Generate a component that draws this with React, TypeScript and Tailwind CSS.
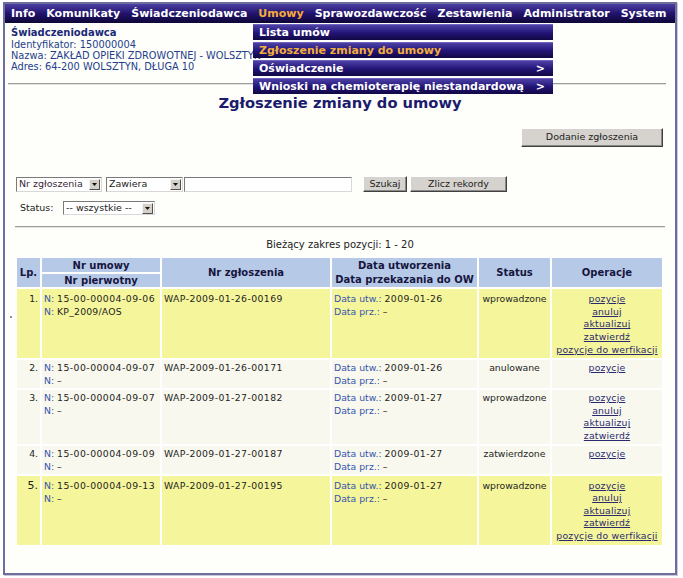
import React from 'react';

const menu = ['Info', 'Komunikaty', 'Świadczeniodawca', 'Umowy', 'Sprawozdawczość', 'Zestawienia', 'Administrator', 'System'];

type Row = {
  lp: string;
  nr: string;
  np: string;
  zg: string;
  dutw: string;
  status: string;
  ops: string[];
  yellow: boolean;
};

const opsFull = ['pozycje', 'anuluj', 'aktualizuj', 'zatwierdź', 'pozycje do werfikacji'];
const opsMid = ['pozycje', 'anuluj', 'aktualizuj', 'zatwierdź'];

const rows: Row[] = [
  { lp: '1.', nr: '15-00-00004-09-06', np: 'KP_2009/AOS', zg: 'WAP-2009-01-26-00169', dutw: '2009-01-26', status: 'wprowadzone', ops: opsFull, yellow: true },
  { lp: '2.', nr: '15-00-00004-09-07', np: '–', zg: 'WAP-2009-01-26-00171', dutw: '2009-01-26', status: 'anulowane', ops: ['pozycje'], yellow: false },
  { lp: '3.', nr: '15-00-00004-09-07', np: '–', zg: 'WAP-2009-01-27-00182', dutw: '2009-01-27', status: 'wprowadzone', ops: opsMid, yellow: false },
  { lp: '4.', nr: '15-00-00004-09-09', np: '–', zg: 'WAP-2009-01-27-00187', dutw: '2009-01-27', status: 'zatwierdzone', ops: ['pozycje'], yellow: false },
  { lp: '5.', nr: '15-00-00004-09-13', np: '–', zg: 'WAP-2009-01-27-00195', dutw: '2009-01-27', status: 'wprowadzone', ops: opsFull, yellow: true },
];

function Arrow() {
  return (
    <div className="w-[11px] h-[11px] bg-[#d4d0c8] border border-t-[#f4f4f4] border-l-[#f4f4f4] border-r-[#505050] border-b-[#505050] flex items-center justify-center shrink-0">
      <svg width="5" height="3" viewBox="0 0 5 3">
        <polygon points="0,0 5,0 2.5,3" fill="#111" />
      </svg>
    </div>
  );
}

function Btn({ label, className }: { label: string; className: string }) {
  return (
    <div
      className={
        'bg-[#d6d3ce] border border-t-white border-l-white border-r-[#404040] border-b-[#404040] shadow-[inset_-1px_-1px_0_#8a8a8a] flex items-center justify-center text-[9.5px] text-[#222] ' +
        className
      }
    >
      {label}
    </div>
  );
}

function DropItem({ label, orange, arrow }: { label: string; orange?: boolean; arrow?: boolean }) {
  return (
    <div className="h-[16px] bg-linear-to-b from-[#4e40a6] via-[#241579] to-[#110844] border-t border-[#6f62c0] flex items-center justify-between pl-[6px] pr-[8px] text-[11px] font-bold leading-none">
      <span className={orange ? 'text-[#f2ad3c]' : 'text-white'}>{label}</span>
      {arrow ? <span className="text-white">&gt;</span> : null}
    </div>
  );
}

export default function App() {
  return (
    <div className="w-[683px] h-[578px] bg-white pt-[2px] pl-[3px] font-['DejaVu_Sans',Verdana,sans-serif] overflow-hidden">
      <div className="relative w-[674px] h-[573px] border-2 border-[#6e6e9c] bg-[#fefefb] shadow-[1px_1px_0_#c8c8d8]">
        {/* menu bar */}
        <div className="h-[19px] bg-linear-to-b from-[#4d3ea4] via-[#22136e] to-[#0e0736] flex items-center pl-[6px] gap-[11px] text-[11px] font-bold leading-none">
          {menu.map((m) => (
            <span key={m} className={m === 'Umowy' ? 'text-[#f4a93a]' : 'text-white'}>
              {m}
            </span>
          ))}
        </div>

        {/* info block */}
        <div className="pt-[4px] pl-[6px] text-[#24408a]">
          <div className="text-[10px] font-bold leading-[12px] text-[#1a2a78]">Świadczeniodawca</div>
          <div className="text-[9.8px] leading-[11px]">Identyfikator: 150000004</div>
          <div className="text-[9.8px] leading-[11px]">Nazwa: ZAKŁAD OPIEKI ZDROWOTNEJ - WOLSZTYN</div>
          <div className="text-[9.8px] leading-[11px]">Adres: 64-200 WOLSZTYN, DŁUGA 10</div>
        </div>

        <div className="mt-[11px] ml-[3px] w-[658px] border-t border-b border-t-[#9c9c9c] border-b-[#e2e2e2]" />

        <div className="mt-[9px] text-center text-[14.7px] font-bold leading-[18px] text-[#1b1b6e]">
          Zgłoszenie zmiany do umowy
        </div>

        <div className="mt-[16px] flex justify-end pr-[12px]">
          <Btn label="Dodanie zgłoszenia" className="w-[142px] h-[19px]" />
        </div>

        {/* search row */}
        <div className="mt-[29px] ml-[11px] flex items-center h-[16px] text-[9.5px] text-[#222]">
          <div className="w-[86px] h-[15px] bg-white border border-t-[#7a7a7a] border-l-[#7a7a7a] border-r-[#d8d8d8] border-b-[#d8d8d8] flex items-center justify-between pl-[2px] pr-[1px]">
            <span className="text-[#3a2a3a]">Nr zgłoszenia</span>
            <Arrow />
          </div>
          <div className="ml-[4px] w-[77px] h-[15px] bg-white border border-t-[#7a7a7a] border-l-[#7a7a7a] border-r-[#d8d8d8] border-b-[#d8d8d8] flex items-center justify-between pl-[2px] pr-[1px]">
            <span>Zawiera</span>
            <Arrow />
          </div>
          <div className="ml-[1px] w-[168px] h-[15px] bg-white border border-t-[#7a7a7a] border-l-[#7a7a7a] border-r-[#d8d8d8] border-b-[#d8d8d8]" />
          <Btn label="Szukaj" className="ml-[11px] w-[44px] h-[16px]" />
          <Btn label="Zlicz rekordy" className="ml-[3px] w-[97px] h-[16px]" />
        </div>

        <div className="mt-[9px] ml-[15px] flex items-center text-[9.5px] text-[#222]">
          <span className="w-[43px]">Status:</span>
          <div className="w-[92px] h-[14px] bg-white border border-t-[#7a7a7a] border-l-[#7a7a7a] border-r-[#d8d8d8] border-b-[#d8d8d8] flex items-center justify-between pl-[2px] pr-[1px]">
            <span>-- wszystkie --</span>
            <Arrow />
          </div>
        </div>

        <div className="mt-[11px] ml-[10px] w-[650px] border-t border-b border-t-[#9c9c9c] border-b-[#e2e2e2]" />

        <div className="mt-[10px] text-center text-[10px] leading-[13px] text-[#222]">Bieżący zakres pozycji: 1 - 20</div>

        <table className="mt-[5px] ml-[10px] w-[649px] table-fixed border-separate border-spacing-[2px] bg-white text-[9.3px] leading-[13px] text-[#1e1e1e]">
          <colgroup>
            <col className="w-[23px]" />
            <col className="w-[118px]" />
            <col className="w-[168px]" />
            <col className="w-[145px]" />
            <col className="w-[71px]" />
            <col className="w-[110px]" />
          </colgroup>
          <thead className="text-[10px] font-bold text-[#161640]">
            <tr>
              <th rowSpan={2} className="bg-[#b6cae8] p-0 text-center leading-[13px]">Lp.</th>
              <th className="bg-[#b6cae8] p-0 text-center leading-[13px] h-[14px]">Nr umowy</th>
              <th rowSpan={2} className="bg-[#b6cae8] p-0 text-center leading-[13px]">Nr zgłoszenia</th>
              <th rowSpan={2} className="bg-[#b6cae8] p-0 text-center leading-[13.5px]">
                Data utworzenia
                <br />
                Data przekazania do OW
              </th>
              <th rowSpan={2} className="bg-[#b6cae8] p-0 text-center leading-[13px]">Status</th>
              <th rowSpan={2} className="bg-[#b6cae8] p-0 text-center leading-[13px]">Operacje</th>
            </tr>
            <tr>
              <th className="bg-[#b6cae8] p-0 text-center leading-[13px]">Nr pierwotny</th>
            </tr>
          </thead>
          <tbody>
            {rows.map((r) => {
              const bg = r.yellow ? 'bg-[#f5f59c]' : 'bg-[#f8f8ee]';
              const big = r.ops.length === 5;
              return (
                <tr key={r.lp}>
                  <td className={bg + ' align-top text-right pr-[2px] py-[1px] ' + (big ? 'pt-[3px]' : '')}>
                    <span className={r.lp === '5.' ? 'text-[11px]' : ''}>{r.lp}</span>
                  </td>
                  <td className={bg + ' align-top pl-[2px] py-[1px] ' + (big ? 'pt-[3px]' : '')}>
                    <div className="whitespace-nowrap">
                      <span className="text-[#3656ad]">N:</span> <span className="tracking-[0.45px]">{r.nr}</span>
                    </div>
                    <div className="whitespace-nowrap">
                      <span className="text-[#3656ad]">N:</span> <span className="tracking-[0.2px]">{r.np}</span>
                    </div>
                  </td>
                  <td className={bg + ' align-top pl-[2px] py-[1px] ' + (big ? 'pt-[3px]' : '')}>
                    <span className="tracking-[0.4px]">{r.zg}</span>
                  </td>
                  <td className={bg + ' align-top pl-[2px] py-[1px] ' + (big ? 'pt-[3px]' : '')}>
                    <div className="whitespace-nowrap">
                      <span className="text-[#3656ad]">Data utw.:</span> <span className="tracking-[0.4px]">{r.dutw}</span>
                    </div>
                    <div>
                      <span className="text-[#3656ad]">Data prz.:</span> –
                    </div>
                  </td>
                  <td className={bg + ' align-top text-center py-[1px] whitespace-nowrap ' + (big ? 'pt-[3px]' : '')}>{r.status}</td>
                  <td className={bg + ' align-top text-center py-[1px] ' + (big ? 'pt-[4px] pb-[2px]' : 'pt-[2px]')}>
                    {r.ops.map((o) => (
                      <div key={o} className="leading-[12.6px] whitespace-nowrap">
                        <span className="underline tracking-[0.2px] text-[#2a2a6e]">{o}</span>
                      </div>
                    ))}
                  </td>
                </tr>
              );
            })}
          </tbody>
        </table>

        {/* dropdown menu */}
        <div className="absolute left-[248px] top-[20px] w-[300px] flex flex-col gap-[2px]">
          <DropItem label="Lista umów" />
          <DropItem label="Zgłoszenie zmiany do umowy" orange />
          <DropItem label="Oświadczenie" arrow />
          <DropItem label="Wnioski na chemioterapię niestandardową" arrow />
        </div>

        <div className="absolute left-[5px] top-[312px] w-[2px] h-[2px] bg-[#909090]" />
      </div>
    </div>
  );
}
